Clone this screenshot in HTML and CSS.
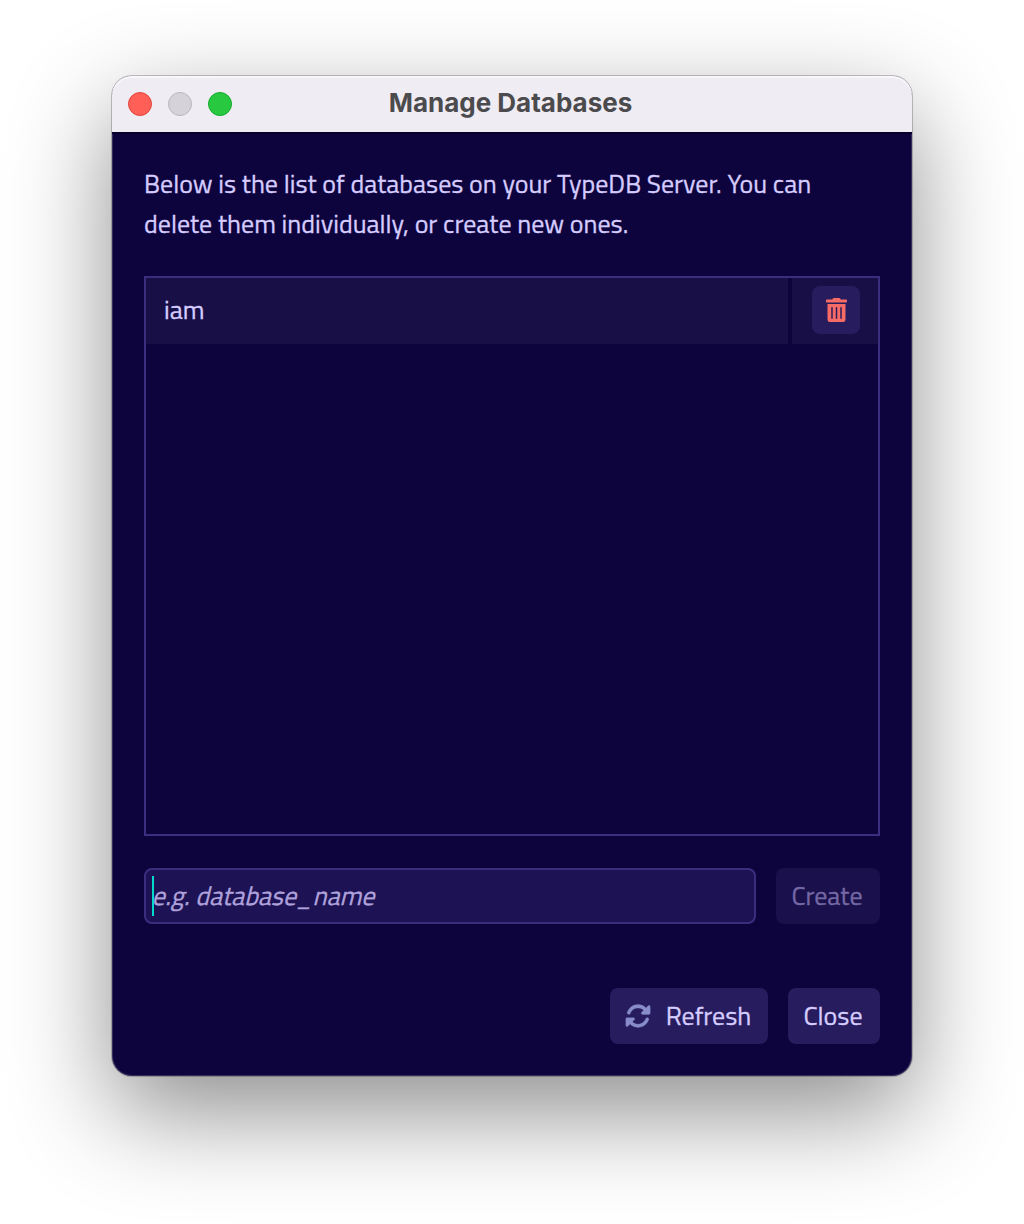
FILE: index.html
```html
<!DOCTYPE html>
<html lang="en">
<head>
<meta charset="utf-8">
<title>Manage Databases</title>
<link rel="stylesheet" href="styles.css">
</head>
<body>
<main class="window">
  <header class="titlebar">
    <div class="lights"><span class="light red"></span><span class="light gray"></span><span class="light green"></span></div>
    <h1 class="title">Manage Databases</h1>
  </header>
  <section class="content">
    <p class="intro">Below is the list of databases on your TypeDB Server. You can<br>delete them individually, or create new ones.</p>
    <div class="list">
      <div class="row">
        <div class="cell name">iam</div>
        <div class="cell action">
          <button class="button delete" aria-label="Delete">
            <svg width="21" height="24" viewBox="0 0 448 512"><path fill="currentColor" d="M32 464a48 48 0 0 0 48 48h288a48 48 0 0 0 48-48V128H32zm272-256a16 16 0 0 1 32 0v224a16 16 0 0 1-32 0zm-96 0a16 16 0 0 1 32 0v224a16 16 0 0 1-32 0zm-96 0a16 16 0 0 1 32 0v224a16 16 0 0 1-32 0zM432 32H312l-9.400-18.700A24 24 0 0 0 281.100 0H166.800a23.720 23.720 0 0 0-21.400 13.300L136 32H16A16 16 0 0 0 0 48v32a16 16 0 0 0 16 16h416a16 16 0 0 0 16-16V48a16 16 0 0 0-16-16z"/></svg>
          </button>
        </div>
      </div>
    </div>
    <div class="form">
      <div class="input"><span class="caret"></span><span class="placeholder">e.g. database_name</span></div>
      <button class="button create" disabled>Create</button>
    </div>
    <footer class="footer">
      <button class="button refresh">
        <svg width="26" height="26" viewBox="0 0 512 512"><path fill="currentColor" stroke="currentColor" stroke-width="6" d="M142.900 142.900c62.200-62.200 162.700-62.500 225.300-1L327 183c-6.900 6.900-8.900 17.200-5.200 26.200s12.500 14.800 22.200 14.800H472c13.300 0 24-10.700 24-24V72c0-9.700-5.800-18.500-14.800-22.200s-19.300-1.700-26.200 5.200L413.400 96.600c-87.600-86.500-228.700-86.200-315.800 1C73.200 122 55.600 150.700 44.800 181.400c-5.900 16.700 2.900 34.900 19.500 40.800s34.900-2.900 40.800-19.500c7.700-21.800 20.200-42.300 37.800-59.800zM16 312V440c0 9.700 5.800 18.500 14.800 22.200s19.300 1.700 26.200-5.200l41.600-41.600c87.600 86.500 228.700 86.200 315.800-1c24.400-24.400 42.100-53.100 52.900-83.700c5.900-16.700-2.900-34.900-19.500-40.800s-34.900 2.900-40.800 19.500c-7.700 21.800-20.200 42.300-37.800 59.800c-62.200 62.200-162.700 62.500-225.300 1L185 329c6.900-6.900 8.900-17.200 5.200-26.200s-12.500-14.800-22.200-14.800H40c-13.300 0-24 10.700-24 24z"/></svg>
        <span>Refresh</span>
      </button>
      <button class="button close">Close</button>
    </footer>
  </section>
</main>
</body>
</html>
```
FILE: styles.css
```css
* { box-sizing: border-box; }
body {
  margin: 0;
  height: 1224px;
  padding: 76px 112px 148px;
  overflow: hidden;
  background: #fff;
  font-family: "Titillium Web", Roboto, sans-serif;
  font-size: 26px;
  line-height: 40px;
  color: #d5ccff;
  -webkit-text-stroke: .3px currentColor;
}
.window {
  width: 800px;
  height: 1000px;
  display: flex;
  flex-direction: column;
  border-radius: 20px;
  background: #0e043d;
  box-shadow: inset 0 0 0 1px rgba(255, 255, 255, .16), 0 0 0 1px rgba(0, 0, 0, .22), 0 36px 100px rgba(0, 0, 0, .45);
}
.titlebar {
  height: 56px;
  display: grid;
  grid-template-columns: 104px 1fr 104px;
  align-items: center;
  padding: 0 16px;
  border-radius: 20px 20px 0 0;
  background: #f0ecf4;
  box-shadow: inset 0 2px 0 #f8f6fa, 0 2px 0 #07002a;
}
.lights { display: flex; gap: 16px; }
.light { width: 24px; height: 24px; border-radius: 50%; border: 1px solid; }
.red { background: #ff5f57; border-color: #e2463f; }
.gray { background: #d5d2d9; border-color: #b9b6bd; }
.green { background: #28c840; border-color: #12ac28; }
.title {
  margin: 0;
  padding: 0 3px 2px 0;
  text-align: center;
  font: 700 26px/40px Inter, sans-serif;
  color: #4b4a4d;
  white-space: nowrap;
  -webkit-text-stroke: 0;
}
.content {
  flex: 1;
  display: flex;
  flex-direction: column;
  padding: 32px;
}
.intro { margin: 0 0 32px; white-space: nowrap; }
.list { height: 560px; border: 2px solid #3b2d7f; }
.row { display: grid; grid-template-columns: 1fr 86px; gap: 4px; height: 66px; }
.cell { display: flex; align-items: center; padding-bottom: 2px; background: #180f46; }
.name { padding-left: 18px; }
.action { padding-left: 20px; }
.button {
  display: flex;
  align-items: center;
  justify-content: center;
  height: 56px;
  padding: 0 2px 0 0;
  border: 0;
  border-radius: 8px;
  background: #271c5d;
  color: inherit;
  font: inherit;
}
.delete { width: 48px; height: 48px; padding: 0 0 1px; color: #f66b65; }
.form { display: flex; gap: 20px; margin: 32px 0 64px; }
.input {
  flex: 1;
  height: 56px;
  display: flex;
  align-items: center;
  padding-left: 6px;
  border: 2px solid #3b2d7f;
  border-radius: 8px;
  background: #1d1253;
  color: #afa2dc;
}
.caret { width: 2px; height: 40px; margin-right: -2px; background: #02dac9; }
/* Slanted roman letterforms rather than the italic face */
.placeholder { transform: skewX(-14deg); transform-origin: 0 70%; }
.create { width: 104px; background: #1a104b; color: #7468a5; }
.footer { display: flex; justify-content: flex-end; gap: 20px; }
.refresh { width: 158px; gap: 15px; }
.refresh svg { color: #888dca; }
.close { width: 92px; }
```
